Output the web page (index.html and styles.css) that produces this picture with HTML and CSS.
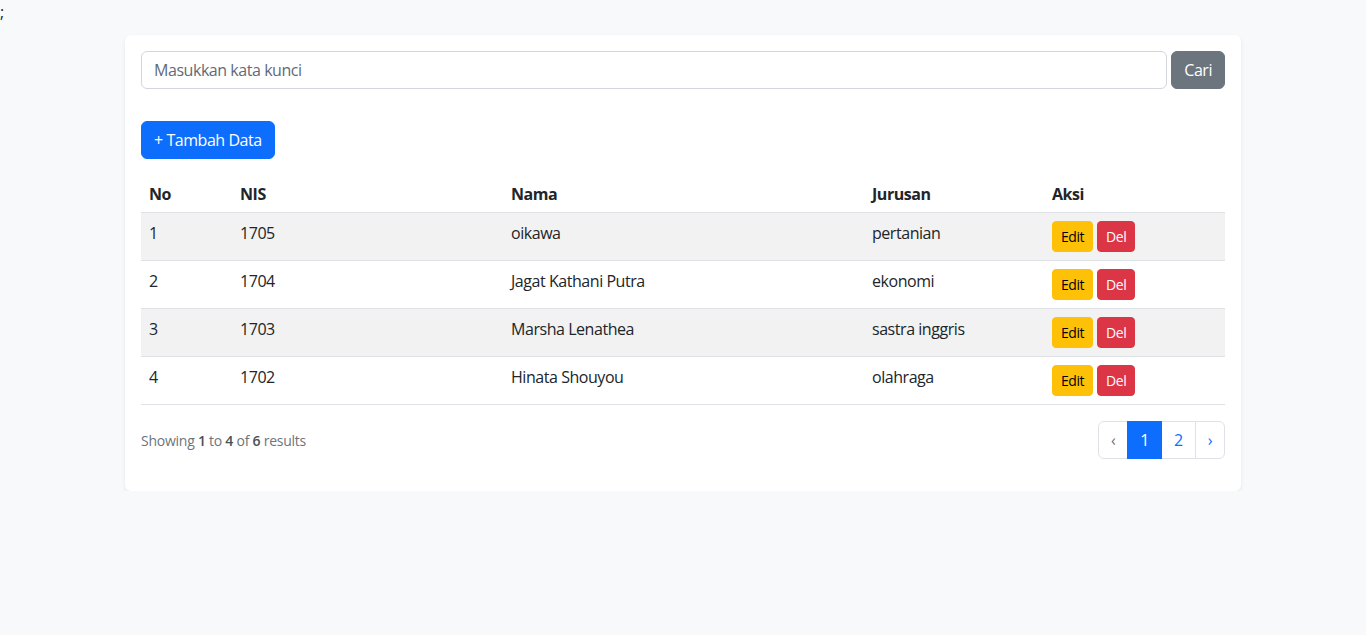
FILE: index.html
```html
<!DOCTYPE html>
<html lang="id">
<head>
<meta charset="utf-8">
<title>Data Siswa</title>
<link rel="stylesheet" href="styles.css">
</head>
<body>
;
<div class="container">
  <div class="card">
    <form class="search">
      <input class="search-input" type="text" placeholder="Masukkan kata kunci">
      <button class="btn btn-secondary" type="button">Cari</button>
    </form>
    <div class="actions">
      <button class="btn btn-primary" type="button">+ Tambah Data</button>
    </div>
    <table class="table">
      <colgroup>
        <col class="c-no"><col class="c-nis"><col class="c-nama"><col class="c-jur"><col class="c-aksi">
      </colgroup>
      <thead>
        <tr><th>No</th><th>NIS</th><th>Nama</th><th>Jurusan</th><th>Aksi</th></tr>
      </thead>
      <tbody>
        <tr class="odd"><td>1</td><td>1705</td><td>oikawa</td><td>pertanian</td><td><div class="btns"><button class="btn-sm btn-warning">Edit</button><button class="btn-sm btn-danger">Del</button></div></td></tr>
        <tr><td>2</td><td>1704</td><td>Jagat Kathani Putra</td><td>ekonomi</td><td><div class="btns"><button class="btn-sm btn-warning">Edit</button><button class="btn-sm btn-danger">Del</button></div></td></tr>
        <tr class="odd"><td>3</td><td>1703</td><td>Marsha Lenathea</td><td>sastra inggris</td><td><div class="btns"><button class="btn-sm btn-warning">Edit</button><button class="btn-sm btn-danger">Del</button></div></td></tr>
        <tr><td>4</td><td>1702</td><td>Hinata Shouyou</td><td>olahraga</td><td><div class="btns"><button class="btn-sm btn-warning">Edit</button><button class="btn-sm btn-danger">Del</button></div></td></tr>
      </tbody>
    </table>
    <div class="pager">
      <p class="summary">Showing <b>1</b> to <b>4</b> of <b>6</b> results</p>
      <ul class="pagination">
        <li class="page disabled"><span>&lsaquo;</span></li>
        <li class="page active"><span>1</span></li>
        <li class="page"><a href="#">2</a></li>
        <li class="page"><a href="#">&rsaquo;</a></li>
      </ul>
    </div>
  </div>
</div>
</body>
</html>
```
FILE: styles.css
```css
* { box-sizing: border-box; }
html, body { margin: 0; }
body {
  background: #f8f9fa;
  color: #212529;
  font-family: "Open Sans", "Noto Sans", sans-serif;
  font-size: 16px;
  line-height: 1.5;
  letter-spacing: -0.45px;
}
.container {
  width: 1140px;
  margin: 11px auto 0;
  padding: 0 12px;
}
.card {
  background: #fff;
  border-radius: 6px;
  box-shadow: 0 2px 4px rgba(0,0,0,.075);
  padding: 16px;
}
.search {
  display: flex;
  gap: 4px;
  margin: 0 0 32px;
}
.search-input {
  flex: 1;
  height: 38px;
  border: 1px solid #d3d6dc;
  border-radius: 6px;
  padding: 6px 12px;
  font: inherit;
  letter-spacing: inherit;
  color: #212529;
  background: #fff;
}
.search-input::placeholder { color: #5f6b77; }
.btn {
  height: 38px;
  border: 1px solid transparent;
  border-radius: 6px;
  padding: 6px 12px;
  font: inherit;
  letter-spacing: inherit;
  color: #fff;
  cursor: pointer;
}
.btn-secondary { background: #6c757d; border-color: #6c757d; }
.btn-primary { background: #0d6efd; border-color: #0d6efd; }
.actions { margin-bottom: 15px; }
.table {
  width: 100%;
  border-collapse: collapse;
  margin-bottom: 16px;
}
.c-no { width: 91px; }
.c-nis { width: 271px; }
.c-nama { width: 361px; }
.c-jur { width: 180px; }
.c-aksi { width: 181px; }
.table th, .table td {
  padding: 8px;
  text-align: left;
  vertical-align: top;
  border-bottom: 1px solid #dee2e6;
}
.table th { font-weight: 700; padding-bottom: 6px; }
.table tr.odd td { background: #f2f2f2; }
.btns { display: flex; gap: 4px; }
.btn-sm {
  height: 31px;
  border: 1px solid transparent;
  border-radius: 4px;
  padding: 4px 8px;
  font: inherit;
  letter-spacing: inherit;
  font-size: 14px;
  line-height: 21px;
  cursor: pointer;
}
.btn-warning { background: #ffc107; border-color: #ffc107; color: #000; }
.btn-danger { background: #dc3545; border-color: #dc3545; color: #fff; }
.pager {
  display: flex;
  justify-content: space-between;
  align-items: center;
}
.summary {
  margin: 0 0 16px;
  font-size: 14px;
  letter-spacing: -0.25px;
  color: #6c757d;
}
.summary b { font-weight: 600; color: #495057; }
.pagination {
  display: flex;
  list-style: none;
  margin: 0 0 16px;
  padding: 0;
}
.page span, .page a {
  display: block;
  height: 38px;
  padding: 6px 12px;
  border: 1px solid #dee2e6;
  margin-left: -1px;
  color: #0d6efd;
  text-decoration: none;
  background: #fff;
}
.page:first-child span { margin-left: 0; border-radius: 6px 0 0 6px; }
.page:last-child a { border-radius: 0 6px 6px 0; }
.page.disabled span { color: #6c757d; }
.page.active span { background: #0d6efd; border-color: #0d6efd; color: #fff; position: relative; z-index: 1; }
```
